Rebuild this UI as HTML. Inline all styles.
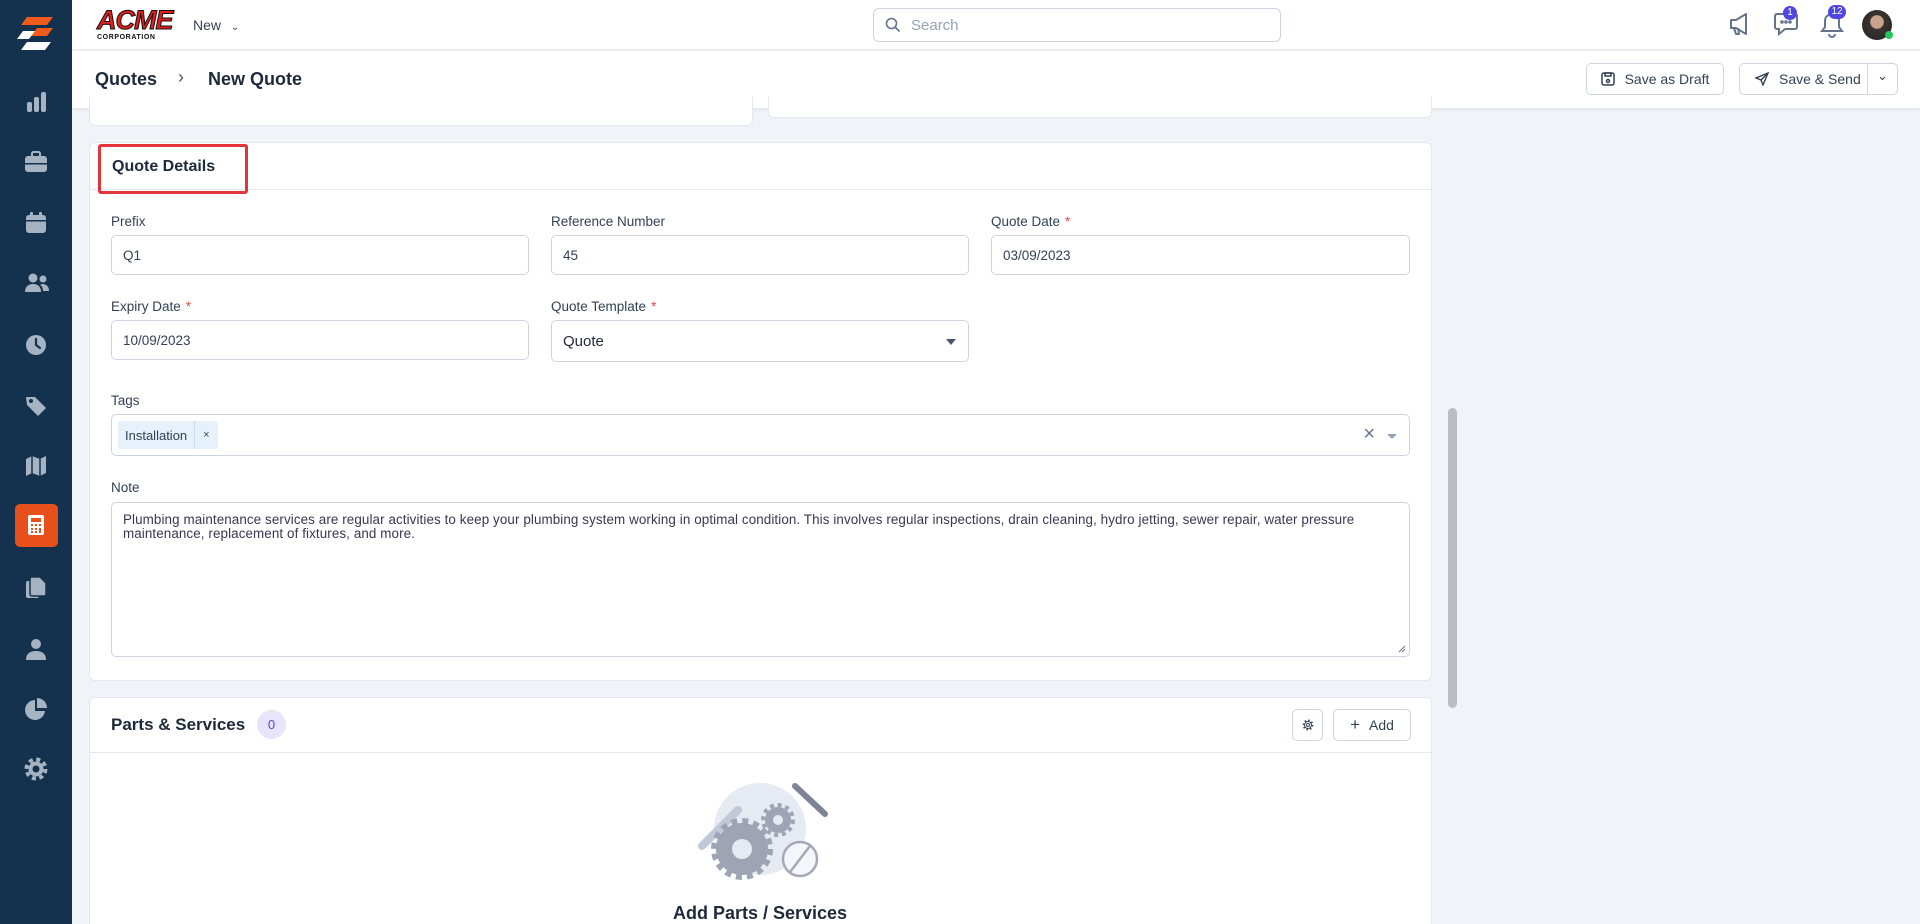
<!DOCTYPE html>
<html style="overflow:hidden"><head><meta charset="utf-8"><style>
*{box-sizing:border-box;margin:0;padding:0}
html,body{width:1920px;height:924px;overflow:hidden}
body{background:#f0f3f8;font-family:"Liberation Sans",sans-serif;color:#334155;position:relative}
.abs{position:absolute}
.side{left:0;top:0;width:72px;height:924px;background:#14324d}
.side svg{position:absolute;left:24px}
.top{left:72px;top:0;width:1848px;height:50px;background:#fff;border-bottom:1px solid #e2e8f0}
.crumb{left:72px;top:51px;width:1848px;height:57px;background:#fff;box-shadow:0 2px 3px rgba(0,0,0,.06)}
.card{background:#fff;border:1px solid #e2e8f0;border-radius:6px}
.lbl{font-size:13.5px;color:#334155}
.inp{border:1px solid #cbd5e1;border-radius:5px;background:#fff;font-size:13.5px;color:#334155;padding:0 11px;display:flex;align-items:center}
.req{color:#ef4444;margin-left:5px}
.btn{border:1px solid #cbd5e1;border-radius:5px;background:#fff;font-size:14px;color:#334155;display:flex;align-items:center;justify-content:center}
.badge{background:#4f46e5;color:#fff;font-size:10px;border-radius:8px;height:14px;min-width:14px;padding:0 3px;text-align:center;line-height:14px}
</style></head><body>

<div class="abs side">
  <svg style="left:17px;top:17px" width="38" height="42" viewBox="0 0 38 42"><polygon points="10,0 36,0 30,8 4,8" fill="#f05a1a"/><polygon points="20,11 36,11 30,19 14,19" fill="#f05a1a"/><polygon points="6,14 18,14 12,22 0,22" fill="#fff"/><polygon points="10,25 34,25 28,33 4,33" fill="#fff"/></svg>
  <svg style="top:91px" width="24" height="22" viewBox="0 0 24 22" fill="#a6b3c2"><rect x="3" y="11" width="5" height="10" rx="2"/><rect x="10" y="6" width="5" height="15" rx="2"/><rect x="17" y="1" width="5" height="20" rx="2"/></svg>
  <svg style="top:151px" width="24" height="22" viewBox="0 0 24 22" fill="#a6b3c2"><rect x="8" y="1" width="8" height="5" rx="1.5" fill="none" stroke="#a6b3c2" stroke-width="2"/><rect x="1" y="5" width="22" height="16" rx="3"/><rect x="1" y="12" width="22" height="1.5" fill="#14324d"/></svg>
  <svg style="top:211px" width="24" height="24" viewBox="0 0 24 24" fill="#a6b3c2"><rect x="2" y="4" width="20" height="18" rx="3"/><rect x="6" y="1" width="3" height="5" rx="1"/><rect x="15" y="1" width="3" height="5" rx="1"/><rect x="2" y="9" width="20" height="1.5" fill="#14324d"/></svg>
  <svg style="top:272px" width="26" height="22" viewBox="0 0 26 22" fill="#a6b3c2"><circle cx="9" cy="6" r="4.5"/><circle cx="19" cy="7" r="3.5"/><path d="M1 20c0-6 4-8 8-8s8 2 8 8z"/><path d="M18 12c4 0 7 2 7 7h-6c0-3-1-5-3-6z"/></svg>
  <svg style="top:333px" width="24" height="24" viewBox="0 0 24 24"><circle cx="12" cy="12" r="10" fill="#a6b3c2"/><path d="M12 6v6l4 3" stroke="#14324d" stroke-width="2.2" fill="none" stroke-linecap="round"/></svg>
  <svg style="top:394px" width="24" height="24" viewBox="0 0 24 24" fill="#a6b3c2"><path d="M2 3h9l11 11-8 8L3 11z"/><circle cx="7" cy="7" r="2" fill="#14324d"/></svg>
  <svg style="top:454px" width="24" height="24" viewBox="0 0 24 24" fill="#a6b3c2"><path d="M2 5l6-3 8 3 6-3v17l-6 3-8-3-6 3z"/><path d="M8 2v17M16 5v17" stroke="#14324d" stroke-width="1.5"/></svg>
  <div class="abs" style="left:15px;top:504px;width:43px;height:43px;background:#e8501b;border-radius:5px"></div>
  <svg style="left:27px;top:514px" width="18" height="22" viewBox="0 0 18 22"><rect x="1" y="1" width="16" height="20" rx="2" fill="#fff"/><rect x="4" y="4" width="10" height="4" fill="#e8501b"/><g fill="#e8501b"><rect x="4" y="10" width="2" height="2"/><rect x="8" y="10" width="2" height="2"/><rect x="12" y="10" width="2" height="2"/><rect x="4" y="14" width="2" height="2"/><rect x="8" y="14" width="2" height="2"/><rect x="12" y="14" width="2" height="5"/><rect x="4" y="17" width="2" height="2"/><rect x="8" y="17" width="2" height="2"/></g></svg>
  <svg style="top:576px" width="24" height="24" viewBox="0 0 24 24" fill="#a6b3c2"><rect x="2" y="5" width="13" height="17" rx="2"/><path d="M8 1h8l6 6v11a2 2 0 0 1-2 2H8a2 2 0 0 1-2-2V3a2 2 0 0 1 2-2z" stroke="#14324d" stroke-width="1.5"/></svg>
  <svg style="top:637px" width="24" height="24" viewBox="0 0 24 24" fill="#a6b3c2"><circle cx="12" cy="7" r="5"/><path d="M2 23c0-7 5-9 10-9s10 2 10 9z"/></svg>
  <svg style="top:697px" width="24" height="24" viewBox="0 0 24 24" fill="#a6b3c2"><path d="M11 3a10 10 0 1 0 10 11H11z"/><path d="M13 1a10 10 0 0 1 10 10H13z"/></svg>
  <svg style="top:757px" width="24" height="24" viewBox="0 0 24 24"><circle cx="12" cy="12" r="9.5" fill="none" stroke="#a6b3c2" stroke-width="4" stroke-dasharray="4 3.45"/><circle cx="12" cy="12" r="7.5" fill="#a6b3c2"/><circle cx="12" cy="12" r="3.5" fill="#14324d"/></svg>
</div>

<div class="abs top">
  <div class="abs" style="left:25px;top:7px;font-weight:900;font-size:27px;color:#e11d1d;letter-spacing:-1px;line-height:27px;font-style:italic;-webkit-text-stroke:1px #111">ACME</div>
  <div class="abs" style="left:25px;top:34px;font-weight:700;font-size:7px;color:#111;letter-spacing:.6px">CORPORATION</div>
  <div class="abs" style="left:121px;top:17px;font-size:14px;color:#334155">New <span style="font-size:10px;margin-left:6px">&#8964;</span></div>
  <div class="abs inp" style="left:801px;top:8px;width:408px;height:34px;border-radius:6px;color:#94a3b8;font-size:15px">
    <svg width="16" height="16" viewBox="0 0 16 16" style="margin-right:10px"><circle cx="6.5" cy="6.5" r="5" stroke="#64748b" stroke-width="1.6" fill="none"/><path d="M10.5 10.5l4 4" stroke="#64748b" stroke-width="1.6"/></svg>Search</div>
  <svg class="abs" style="left:1656px;top:12px" width="26" height="24" viewBox="0 0 26 24" fill="none" stroke="#64748b" stroke-width="2" stroke-linejoin="round"><path d="M3 8h5l10-6v20L8 16H3z"/><path d="M6 16l2 6h3l-1-6"/></svg>
  <svg class="abs" style="left:1701px;top:12px" width="26" height="24" viewBox="0 0 26 24" fill="none" stroke="#64748b" stroke-width="2"><path d="M4 2h18a2 2 0 0 1 2 2v11a2 2 0 0 1-2 2H12l-6 5v-5H4a2 2 0 0 1-2-2V4a2 2 0 0 1 2-2z"/><circle cx="9" cy="10" r=".8" fill="#64748b"/><circle cx="13" cy="10" r=".8" fill="#64748b"/><circle cx="17" cy="10" r=".8" fill="#64748b"/></svg>
  <div class="abs badge" style="left:1711px;top:6px">1</div>
  <svg class="abs" style="left:1748px;top:12px" width="24" height="26" viewBox="0 0 24 26" fill="none" stroke="#64748b" stroke-width="2"><path d="M12 2a7 7 0 0 1 7 7v6l3 4H2l3-4V9a7 7 0 0 1 7-7z"/><path d="M9 22a3 3 0 0 0 6 0"/></svg>
  <div class="abs badge" style="left:1756px;top:5px;min-width:18px">12</div>
  <div class="abs" style="left:1790px;top:10px;width:30px;height:30px;border-radius:50%;background:radial-gradient(circle at 50% 40%,#c9a48a 0 28%,#3a3330 30%,#222 100%)"></div>
  <div class="abs" style="left:1813px;top:31px;width:8px;height:8px;border-radius:50%;background:#22c55e"></div>
</div>

<div class="abs crumb">
  <div class="abs" style="left:23px;top:18px;font-size:18px;font-weight:600;color:#1e293b">Quotes</div>
  <div class="abs" style="left:106px;top:16px;font-size:18px;color:#475569">&#8250;</div>
  <div class="abs" style="left:136px;top:18px;font-size:18px;font-weight:600;color:#1e293b">New Quote</div>
  <div class="abs btn" style="left:1514px;top:12px;width:138px;height:32px">
    <svg width="14" height="14" viewBox="0 0 14 14" fill="none" stroke="#334155" stroke-width="1.5" style="margin-right:10px"><rect x="1" y="1" width="12" height="12" rx="2"/><rect x="4" y="1" width="6" height="3"/><circle cx="7" cy="9" r="1.5"/></svg>Save as Draft</div>
  <div class="abs btn" style="left:1667px;top:12px;width:159px;height:32px;justify-content:flex-start;padding-left:15px">
    <svg width="14" height="14" viewBox="0 0 14 14" fill="none" stroke="#334155" stroke-width="1.4" style="margin-right:10px"><path d="M13 1L1 6l5 2 2 5z"/><path d="M6 8l7-7"/></svg>Save &amp; Send
    <div class="abs" style="left:127px;top:0;width:1px;height:30px;background:#cbd5e1"></div>
    <div class="abs" style="left:137px;top:4px;font-size:13px">&#8964;</div>
  </div>
</div>

<div class="abs card" style="left:89px;top:96px;width:664px;height:30px;border-top:none;border-radius:0 0 6px 6px"></div>
<div class="abs card" style="left:768px;top:96px;width:664px;height:22px;border-top:none;border-radius:0 0 6px 6px"></div>

<div class="abs card" style="left:89px;top:142px;width:1343px;height:539px">
  <div class="abs" style="left:0;top:46px;width:1341px;height:1px;background:#e2e8f0"></div>
  <div class="abs" style="left:8px;top:1px;width:150px;height:50px;border:3px solid #e5343a;border-radius:3px"></div>
  <div class="abs" style="left:22px;top:15px;font-size:16px;font-weight:600;color:#1e293b">Quote Details</div>
</div>
<div class="abs lbl" style="left:111px;top:214px">Prefix</div>
<div class="abs inp" style="left:111px;top:235px;width:418px;height:40px">Q1</div>
<div class="abs lbl" style="left:551px;top:214px">Reference Number</div>
<div class="abs inp" style="left:551px;top:235px;width:418px;height:40px">45</div>
<div class="abs lbl" style="left:991px;top:214px">Quote Date<span class="req">*</span></div>
<div class="abs inp" style="left:991px;top:235px;width:419px;height:40px">03/09/2023</div>
<div class="abs lbl" style="left:111px;top:299px">Expiry Date<span class="req">*</span></div>
<div class="abs inp" style="left:111px;top:320px;width:418px;height:40px">10/09/2023</div>
<div class="abs lbl" style="left:551px;top:299px">Quote Template<span class="req">*</span></div>
<div class="abs inp" style="left:551px;top:320px;width:418px;height:42px;font-size:15px;color:#1e293b">Quote<div class="abs" style="right:12px;top:18px;border:5px solid transparent;border-top:6px solid #475569"></div></div>
<div class="abs lbl" style="left:111px;top:393px">Tags</div>
<div class="abs inp" style="left:111px;top:414px;width:1299px;height:42px;padding-left:6px">
  <div style="background:#e6f1fc;height:28px;border-radius:2px;display:flex;align-items:center;font-size:13px;color:#334155"><span style="padding:0 7px">Installation</span><span style="width:1px;height:28px;background:#c7dcf0"></span><span style="padding:0 8px;font-size:11px">&#215;</span></div>
  <div class="abs" style="right:34px;top:9px;font-size:20px;color:#64748b;line-height:20px">&#215;</div>
  <div class="abs" style="right:12px;top:19px;border:5px solid transparent;border-top:5px solid #94a3b8"></div>
</div>
<div class="abs lbl" style="left:111px;top:480px">Note</div>
<div class="abs inp" style="left:111px;top:502px;width:1299px;height:155px;align-items:flex-start;padding:10px 11px;font-size:13.4px;letter-spacing:.1px;line-height:14px;color:#3b3550">Plumbing maintenance services are regular activities to keep your plumbing system working in optimal condition. This involves regular inspections, drain cleaning, hydro jetting, sewer repair, water pressure maintenance, replacement of fixtures, and more.
  <svg class="abs" style="right:3px;bottom:3px" width="8" height="8" viewBox="0 0 8 8" stroke="#64748b"><path d="M1 7l6-6M4 7l3-3"/></svg></div>

<div class="abs card" style="left:89px;top:697px;width:1343px;height:240px">
  <div class="abs" style="left:0;top:54px;width:1341px;height:1px;background:#e2e8f0"></div>
  <div class="abs" style="left:21px;top:17px;font-size:17px;font-weight:600;color:#1e293b">Parts &amp; Services</div>
  <div class="abs" style="left:167px;top:12px;width:29px;height:29px;border-radius:50%;background:#e7e4fb;color:#4f46e5;font-size:13px;text-align:center;line-height:29px">0</div>
  <div class="abs btn" style="left:1202px;top:11px;width:31px;height:32px">
    <svg width="12" height="12" viewBox="0 0 24 24"><circle cx="12" cy="12" r="9.5" fill="none" stroke="#334155" stroke-width="3" stroke-dasharray="3 4.45"/><circle cx="12" cy="12" r="7" fill="none" stroke="#334155" stroke-width="2"/><circle cx="12" cy="12" r="3" fill="none" stroke="#334155" stroke-width="2"/></svg></div>
  <div class="abs btn" style="left:1243px;top:11px;width:78px;height:32px"><span style="font-size:17px;margin-right:9px">+</span>Add</div>
</div>
<svg class="abs" style="left:690px;top:774px" width="140" height="120" viewBox="0 0 140 120">
  <circle cx="70" cy="55" r="46" fill="#e6eaf3"/>
  <path d="M12 72l36-36" stroke="#c3c8d6" stroke-width="8" stroke-linecap="round"/>
  <path d="M105 12l30 28" stroke="#7d8496" stroke-width="6" stroke-linecap="round"/>
  <circle cx="52" cy="75" r="28" fill="none" stroke="#9ea4b3" stroke-width="6" stroke-dasharray="6 5"/>
  <circle cx="52" cy="75" r="26" fill="#9ea4b3"/><circle cx="52" cy="75" r="10" fill="#e6eaf3"/>
  <circle cx="88" cy="46" r="15" fill="none" stroke="#9ea4b3" stroke-width="4" stroke-dasharray="4 3.8"/>
  <circle cx="88" cy="46" r="13" fill="#9ea4b3"/><circle cx="88" cy="46" r="5" fill="#e6eaf3"/>
  <circle cx="110" cy="85" r="17" fill="#f5f6f9" stroke="#a4a9b7" stroke-width="2.5"/><path d="M100 98l20-26" stroke="#a4a9b7" stroke-width="2.5"/>
</svg>
<div class="abs" style="left:660px;top:903px;width:200px;text-align:center;font-size:18px;font-weight:600;color:#1e293b">Add Parts / Services</div>

<div class="abs" style="left:1432px;top:408px;width:40px;height:516px;background:#f0f3f8"></div>
<div class="abs" style="left:1448px;top:408px;width:9px;height:300px;border-radius:5px;background:#bdbcc2"></div>
</body></html>
